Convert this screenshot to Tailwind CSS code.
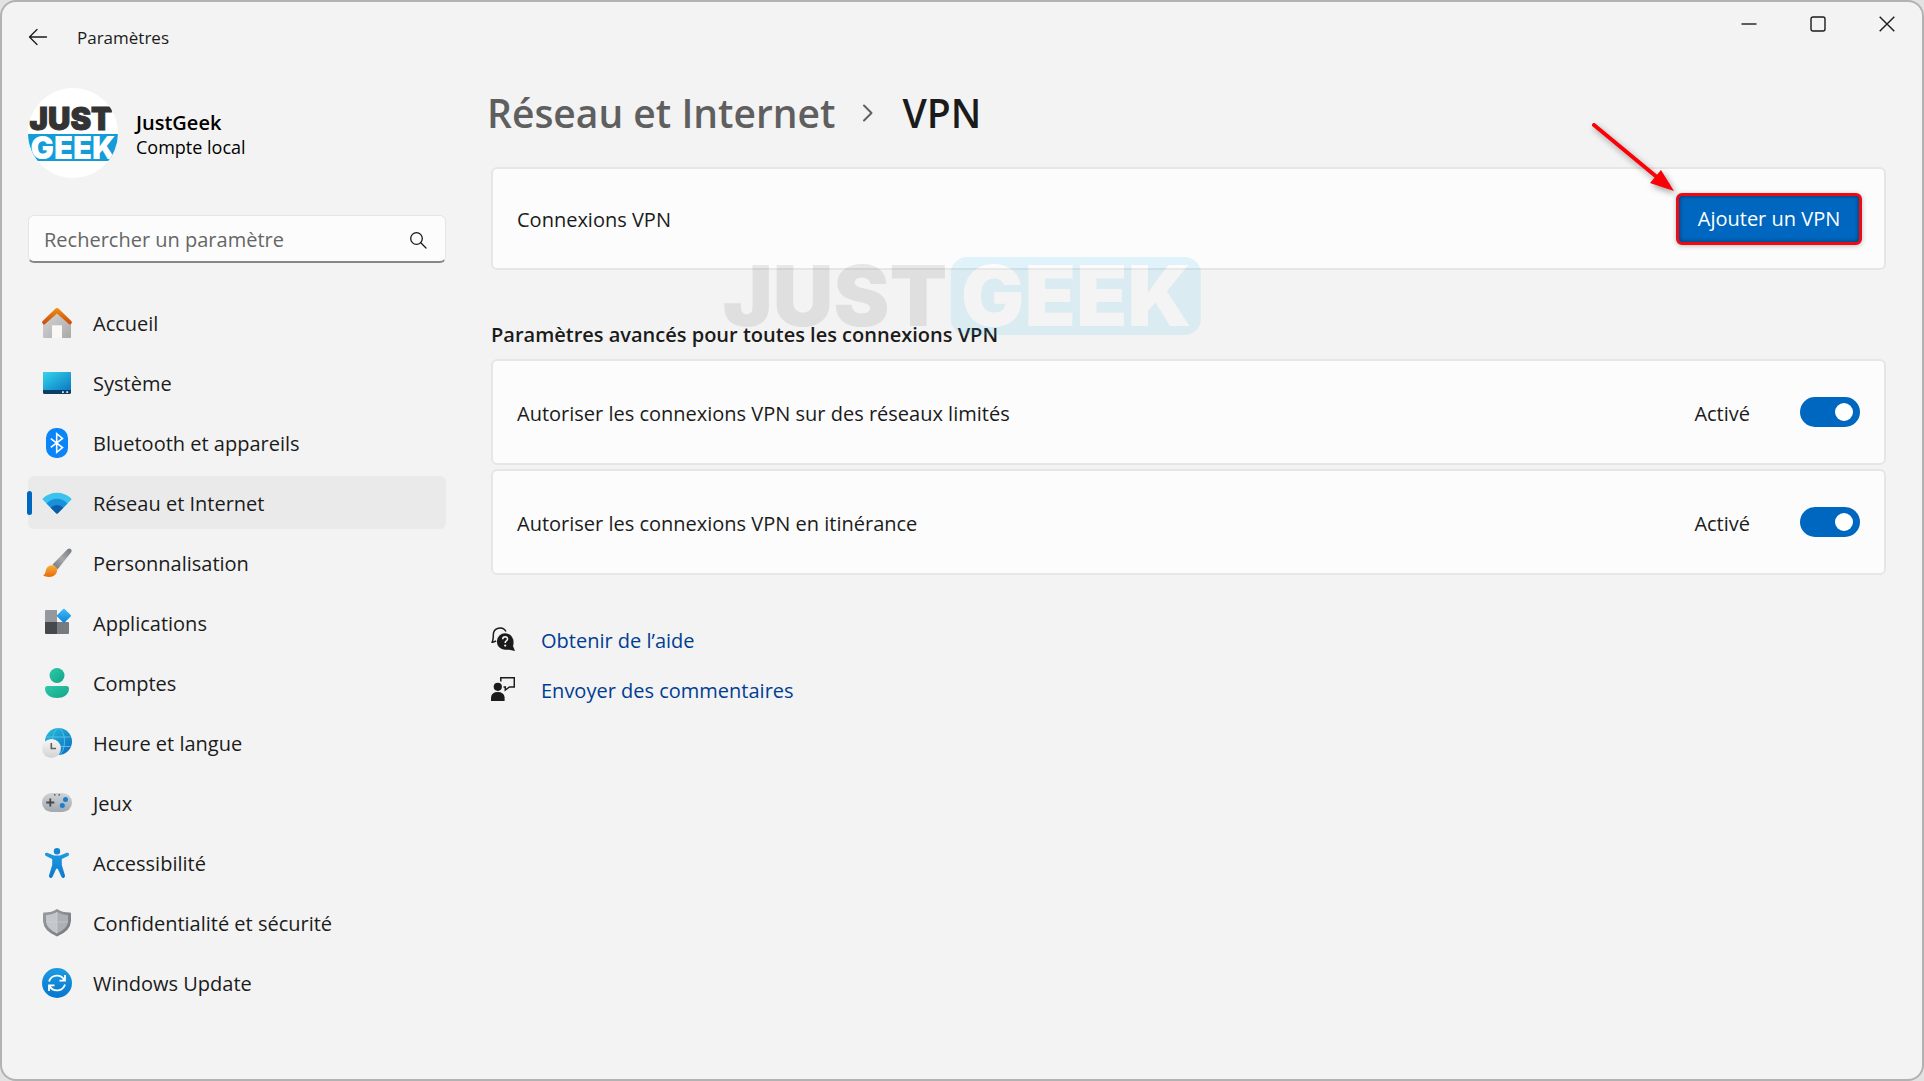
<!DOCTYPE html>
<html lang="fr">
  <head>
    <meta charset="UTF-8" />
    <meta name="viewport" content="width=device-width, initial-scale=1.0" />
    <title>Paramètres</title>
    <script src="https://cdn.jsdelivr.net/npm/@tailwindcss/browser@4"></script>
  </head>
  <body class="bg-[#e2e2e2] font-['Segoe_UI','Open_Sans',sans-serif] text-[#1b1b1b]">
    <div class="relative min-h-screen flex flex-col rounded-2xl border-2 border-[#b2b2b2] bg-[#f3f3f3]">
      <!-- Title bar -->
      <header class="flex h-[70px] items-start justify-between">
        <div class="flex h-full items-center gap-[29px] pl-[26px]">
          <button aria-label="Retour">
            <svg class="h-5 w-5" viewBox="0 0 20 20" fill="none" stroke="#1b1b1b" stroke-width="1.3" stroke-linecap="round" stroke-linejoin="round">
              <path d="M18.500 10H1.500M9 2.500L1.500 10L9 17.500" />
            </svg>
          </button>
          <h1 class="pt-0.5 text-[17px] leading-6">Paramètres</h1>
        </div>
        <div class="flex pr-px">
          <button class="flex h-11 w-[69px] items-center justify-center" aria-label="Réduire">
            <svg class="h-4 w-4" viewBox="0 0 16 16" stroke="#1b1b1b" stroke-width="1.4"><path d="M0.500 8H15.500" /></svg>
          </button>
          <button class="flex h-11 w-[69px] items-center justify-center" aria-label="Agrandir">
            <svg class="h-4 w-4" viewBox="0 0 16 16" fill="none" stroke="#1b1b1b" stroke-width="1.4"><rect x="1" y="1" width="14" height="14" rx="2" /></svg>
          </button>
          <button class="flex h-11 w-[69px] items-center justify-center" aria-label="Fermer">
            <svg class="h-4 w-4" viewBox="0 0 16 16" fill="none" stroke="#1b1b1b" stroke-width="1.4"><path d="M0.700 0.700L15.300 15.300M15.300 0.700L0.700 15.300" /></svg>
          </button>
        </div>
      </header>

      <div class="flex flex-1">
        <!-- Sidebar -->
        <aside class="w-[444px] shrink-0 pl-[26px] pt-4">
          <div class="flex items-center gap-[18px]">
            <svg class="h-[90px] w-[90px]" viewBox="0 0 90 90" role="img" aria-label="JustGeek">
              <clipPath id="avatar"><circle cx="45" cy="45" r="45" /></clipPath>
              <g clip-path="url(#avatar)">
                <rect width="90" height="90" fill="#fff" />
                <rect y="46" width="90" height="27" fill="#149cd8" />
                <g class="font-['Inter'] font-black" font-size="31" text-anchor="middle">
                  <text x="43" y="42" fill="#333" stroke="#333">JUST</text>
                  <text x="45" y="71" fill="#fff">GEEK</text>
                </g>
              </g>
            </svg>
            <div class="pt-1 text-black">
              <p class="text-[20px] font-semibold leading-6">JustGeek</p>
              <p class="text-[18px] leading-6">Compte local</p>
            </div>
          </div>

          <form class="relative mt-[37px]">
            <label for="search" class="sr-only">Rechercher un paramètre</label>
            <input
              type="text"
              id="search"
              placeholder="Rechercher un paramètre"
              class="block h-[48px] w-full rounded-md border border-b-2 border-[#e5e5e5] border-b-[#868686] bg-[#fcfcfc] pl-[15px] pr-12 pt-0.5 text-[20px] placeholder:text-[#666]"
            />
            <svg class="absolute right-[19px] top-4 h-[18px] w-[18px]" viewBox="0 0 18 18" fill="none" stroke="#1b1b1b" stroke-width="1.3" stroke-linecap="round">
              <circle cx="7.500" cy="7.500" r="5.800" /><path d="M11.800 11.800L17 17" />
            </svg>
          </form>

          <nav class="mt-[33px] flex flex-col gap-[7px] text-[20px]">
            <a href="#" class="flex h-[53px] items-center gap-[21px] rounded-md pl-[14px]">
              <svg class="h-[30px] w-[30px]" viewBox="0 0 30 30">
                <defs>
                  <linearGradient id="wall" x1="0" y1="0" x2="1" y2="1"><stop stop-color="#d8d8d8" /><stop offset="1" stop-color="#a9a9a9" /></linearGradient>
                  <linearGradient id="roof" x1="0" y1="0" x2="0" y2="1"><stop stop-color="#f28c12" /><stop offset="1" stop-color="#c8480c" /></linearGradient>
                </defs>
                <path d="M1 14L15 2L29 14V29a1 1 0 0 1-1 1H20V18.500a1 1 0 0 0-1-1H11a1 1 0 0 0-1 1V30H2a1 1 0 0 1-1-1Z" fill="url(#wall)" />
                <path d="M10 17.500h10V30H10z" fill="#faf8f5" />
                <path d="M13.600 0.600Q15-0.500 16.400 0.600L29.300 13Q30.300 14 29.700 15L28.700 16.200Q28 17 27.200 16.200L15 5.500L2.800 16.200Q2 17 1.300 16.200L0.300 15Q-0.300 14 0.700 13Z" fill="url(#roof)" />
              </svg>
              <span class="pt-[3px]">Accueil</span>
            </a>
            <a href="#" class="flex h-[53px] items-center gap-[21px] rounded-md pl-[14px]">
              <svg class="h-[30px] w-[30px]" viewBox="0 0 30 30">
                <defs><linearGradient id="screen" x1="0" y1="0" x2="1" y2="1"><stop stop-color="#35d6ec" /><stop offset="1" stop-color="#0b78c4" /></linearGradient></defs>
                <rect x="1" y="4" width="28" height="22" rx="1.500" fill="#0a3f63" />
                <path d="M1 22V5.500A1.500 1.500 0 0 1 2.500 4h25A1.500 1.500 0 0 1 29 5.500V22Z" fill="url(#screen)" />
                <path d="M20 23.300h1.800v1.600H20zM24.300 23.300h1.800v1.600h-1.800z" fill="#d9eef8" />
              </svg>
              <span class="pt-[3px]">Système</span>
            </a>
            <a href="#" class="flex h-[53px] items-center gap-[21px] rounded-md pl-[14px]">
              <svg class="h-[30px] w-[30px]" viewBox="0 0 30 30">
                <rect x="4" y="0" width="22" height="30" rx="10" fill="#0a84f8" />
                <path d="M8.800 10.600L20.500 19.500L14.700 24.300V5.700L20.500 10.500L8.800 19.400" fill="none" stroke="#fff" stroke-width="1.600" />
              </svg>
              <span class="pt-[3px]">Bluetooth et appareils</span>
            </a>
            <a href="#" class="relative flex h-[53px] items-center gap-[21px] rounded-md bg-[#eaeaea] pl-[14px]" aria-current="page">
              <span class="absolute left-0 h-6 w-[5px] -translate-x-px rounded-full bg-[#0067c0]"></span>
              <svg class="h-[30px] w-[30px]" viewBox="0 0 30 30">
                <path d="M0.800 11.800Q0.200 11 1 10.300Q7 4.800 15 4.800Q23 4.800 29 10.300Q29.800 11 29.200 11.800L15.800 25.200Q15 26 14.200 25.200Z" fill="#3ac3ee" />
                <path d="M4.500 15.500Q9 10.800 15 10.800Q21 10.800 25.500 15.500L15.800 25.200Q15 26 14.200 25.200Z" fill="#1a8fdc" />
                <path d="M8.700 19.700Q11.500 17 15 17Q18.500 17 21.300 19.700L15.800 25.200Q15 26 14.200 25.200Z" fill="#0d5ca8" />
              </svg>
              <span class="pt-[3px]">Réseau et Internet</span>
            </a>
            <a href="#" class="flex h-[53px] items-center gap-[21px] rounded-md pl-[14px]">
              <svg class="h-[30px] w-[30px]" viewBox="0 0 30 30">
                <defs>
                  <linearGradient id="handle" x1="1" y1="0" x2="0" y2="1"><stop stop-color="#75787c" /><stop offset="0.500" stop-color="#a5a8ac" /><stop offset="1" stop-color="#6f7276" /></linearGradient>
                  <linearGradient id="bristle" x1="0" y1="0" x2="0" y2="1"><stop stop-color="#fbab3a" /><stop offset="1" stop-color="#e66a0c" /></linearGradient>
                </defs>
                <path d="M10.500 16.500L25.500 1.200Q27.300-0.300 29 1.200Q30.200 2.700 29 4.600L15.500 21.500Z" fill="url(#handle)" />
                <path d="M10 17.300Q14.500 17.300 15.200 22Q14.800 28.500 7 29Q3 29 1 27.200Q3.500 26.300 3.700 23Q4.800 17.500 10 17.300Z" fill="url(#bristle)" />
              </svg>
              <span class="pt-[3px]">Personnalisation</span>
            </a>
            <a href="#" class="flex h-[53px] items-center gap-[21px] rounded-md pl-[14px]">
              <svg class="h-[30px] w-[30px]" viewBox="0 0 30 30">
                <defs><linearGradient id="tile" x1="0" y1="0" x2="1" y2="1"><stop stop-color="#3fc0f5" /><stop offset="1" stop-color="#0f7fd9" /></linearGradient></defs>
                <path d="M4 2h11v12H3V3a1 1 0 0 1 1-1Z" fill="#95999d" />
                <path d="M3 14h12v12H4a1 1 0 0 1-1-1Z" fill="#45484c" />
                <path d="M15 14h11a1 1 0 0 1 1 1v10a1 1 0 0 1-1 1H15Z" fill="#777b80" />
                <rect x="16.600" y="2.500" width="10.600" height="10.600" rx="1" transform="rotate(45 21.900 7.800)" fill="url(#tile)" />
              </svg>
              <span class="pt-[3px]">Applications</span>
            </a>
            <a href="#" class="flex h-[53px] items-center gap-[21px] rounded-md pl-[14px]">
              <svg class="h-[30px] w-[30px]" viewBox="0 0 30 30">
                <defs><linearGradient id="person" x1="0" y1="0" x2="1" y2="1"><stop stop-color="#2ecaa8" /><stop offset="1" stop-color="#12a488" /></linearGradient></defs>
                <circle cx="15" cy="7.500" r="7.500" fill="url(#person)" />
                <path d="M5.500 18H24.500Q27 18 27 20.500C27 27 21 30 15 30S3 27 3 20.500Q3 18 5.500 18Z" fill="url(#person)" />
              </svg>
              <span class="pt-[3px]">Comptes</span>
            </a>
            <a href="#" class="flex h-[53px] items-center gap-[21px] rounded-md pl-[14px]">
              <svg class="h-[30px] w-[30px]" viewBox="0 0 30 30">
                <defs>
                  <linearGradient id="globe" x1="0" y1="0" x2="1" y2="1"><stop stop-color="#27c2d9" /><stop offset="1" stop-color="#0c66c2" /></linearGradient>
                  <linearGradient id="clock" x1="0" y1="0" x2="0" y2="1"><stop stop-color="#f7f7f7" /><stop offset="1" stop-color="#d2d2d2" /></linearGradient>
                </defs>
                <circle cx="16.500" cy="13.500" r="13.500" fill="url(#globe)" />
                <g fill="none" stroke="#4cc3e6" stroke-width="1">
                  <ellipse cx="16.500" cy="13.500" rx="6" ry="13" />
                  <path d="M4.500 9H28.500M4.500 18.500H28.500" />
                </g>
                <circle cx="9.500" cy="20.500" r="9.500" fill="url(#clock)" />
                <path d="M9.300 15V20.500H14" fill="none" stroke="#5c5f63" stroke-width="1.600" />
              </svg>
              <span class="pt-[3px]">Heure et langue</span>
            </a>
            <a href="#" class="flex h-[53px] items-center gap-[21px] rounded-md pl-[14px]">
              <svg class="h-[30px] w-[30px]" viewBox="0 0 30 30">
                <defs><linearGradient id="pad" x1="0" y1="0" x2="0" y2="1"><stop stop-color="#cfd3d7" /><stop offset="1" stop-color="#a3a8ae" /></linearGradient></defs>
                <rect x="0" y="5" width="30" height="19" rx="9.500" fill="url(#pad)" />
                <path d="M8.300 10.500V18.500M4.300 14.500H12.300" stroke="#44484c" stroke-width="1.800" />
                <circle cx="23.500" cy="11.500" r="2.500" fill="#1580d0" />
                <circle cx="20.300" cy="17.500" r="2.500" fill="#1580d0" />
                <circle cx="12.800" cy="6.800" r="0.900" fill="#5b5f63" />
                <circle cx="17.200" cy="6.800" r="0.900" fill="#5b5f63" />
              </svg>
              <span class="pt-[3px]">Jeux</span>
            </a>
            <a href="#" class="flex h-[53px] items-center gap-[21px] rounded-md pl-[14px]">
              <svg class="h-[30px] w-[30px]" viewBox="0 0 30 30">
                <defs><linearGradient id="body" x1="0" y1="0" x2="0" y2="1"><stop stop-color="#1c9ae2" /><stop offset="1" stop-color="#0f79d0" /></linearGradient></defs>
                <circle cx="15" cy="3.200" r="3.200" fill="#1784d4" />
                <path d="M5.200 4.800L12 7.600H18L24.800 4.800Q26.400 4.400 27 5.800Q27.300 7.300 26 8L19.800 11V17L23 27.500Q23.300 29.300 21.800 29.900Q20.200 30.200 19.400 28.700L15.800 20.800H14.200L10.600 28.700Q9.800 30.200 8.200 29.900Q6.700 29.300 7 27.500L10.200 17V11L4 8Q2.700 7.300 3 5.800Q3.600 4.400 5.200 4.800Z" fill="url(#body)" />
              </svg>
              <span class="pt-[3px]">Accessibilité</span>
            </a>
            <a href="#" class="flex h-[53px] items-center gap-[21px] rounded-md pl-[14px]">
              <svg class="h-[30px] w-[30px]" viewBox="0 0 30 30">
                <defs><linearGradient id="shield" x1="0" y1="0" x2="1" y2="1"><stop stop-color="#9a9da1" /><stop offset="1" stop-color="#73767a" /></linearGradient></defs>
                <path d="M15 1Q20 4.500 28 4.500Q29 4.500 29 5.500V13Q28.500 23 15 28.500Q1.500 23 1 13V5.500Q1 4.500 2 4.500Q10 4.500 15 1Z" fill="url(#shield)" />
                <path d="M15 4V25.500Q4.300 20.500 4 13V7.200Q10 7 15 4Z" fill="#c3c7cb" />
                <path d="M15 4V25.500Q25.700 20.500 26 13V7.200Q20 7 15 4Z" fill="#adb1b5" />
                <path d="M15 4V25.500M4 14H26" stroke="#d0d3d6" stroke-width="0.600" />
              </svg>
              <span class="pt-[3px]">Confidentialité et sécurité</span>
            </a>
            <a href="#" class="flex h-[53px] items-center gap-[21px] rounded-md pl-[14px]">
              <svg class="h-[30px] w-[30px]" viewBox="0 0 30 30">
                <defs><linearGradient id="update" x1="0" y1="0" x2="0" y2="1"><stop stop-color="#1c9be0" /><stop offset="1" stop-color="#0876cf" /></linearGradient></defs>
                <circle cx="15" cy="15" r="15" fill="url(#update)" />
                <path d="M7 13.500A8.300 8.300 0 0 1 22.300 12M17.500 12.600H23V7M23 16.500A8.300 8.300 0 0 1 7.700 18M12.500 17.400H7V23" fill="none" stroke="#fff" stroke-width="1.800" />
              </svg>
              <span class="pt-[3px]">Windows Update</span>
            </a>
          </nav>
        </aside>

        <!-- Content -->
        <main class="flex-1 pl-[45px] pr-9 pt-[14px]">
          <h2 class="-ml-1 flex items-center text-[39px] font-semibold leading-[54px]">
            <a href="#" class="text-[#5f5f5f]">Réseau et Internet</a>
            <svg class="ml-[23px] mr-6 h-5 w-5" viewBox="0 0 20 20" fill="none" stroke="#5f5f5f" stroke-width="2" stroke-linecap="round" stroke-linejoin="round"><path d="M6 2.500L13.500 10L6 17.500" /></svg>
            <span>VPN</span>
          </h2>

          <section class="mt-[27px] flex h-[103px] items-center justify-between rounded-md border-2 border-[#e6e6e6] bg-[#fcfcfc] pl-6 pr-[22px] text-[20px]">
            <span class="pt-[3px]">Connexions VPN</span>
            <div class="relative">
              <button class="h-[52px] w-[186px] rounded-md border-3 border-[#ee0a14] bg-[#0067c0] pt-px text-white shadow-[inset_0_0_5px_#00000080,0_1px_5px_#00000040]">Ajouter un VPN</button>
              <!-- Arrow pointing at the button -->
              <svg class="absolute bottom-full right-full h-[76px] w-[88px] drop-shadow-[2px_3px_3px_#00000060]" viewBox="0 0 88 76">
                <path d="M6 8L70 61" stroke="#fb0007" stroke-width="4" stroke-linecap="round" />
                <path d="M86 74L62 66L73 53Z" fill="#fb0007" />
              </svg>
            </div>
          </section>

          <section class="pt-[51px] text-[20px]">
            <h3 class="font-semibold leading-7">Paramètres avancés pour toutes les connexions VPN</h3>
            <div class="mt-[10px] flex flex-col gap-1">
              <div class="flex h-[106px] items-center rounded-md border-2 border-[#e6e6e6] bg-[#fcfcfc] pl-6 pr-6">
                <label for="metered" class="flex-1 pt-[3px]">Autoriser les connexions VPN sur des réseaux limités</label>
                <span class="mr-[50px] pt-[3px]">Activé</span>
                <input type="checkbox" role="switch" id="metered" checked class="flex h-[30px] w-[60px] appearance-none items-center rounded-full bg-[#a0a0a0] px-[7px] before:h-[18px] before:w-[18px] before:rounded-full before:bg-white checked:justify-end checked:bg-[#0067c0]" />
              </div>
              <div class="flex h-[106px] items-center rounded-md border-2 border-[#e6e6e6] bg-[#fcfcfc] pl-6 pr-6">
                <label for="roaming" class="flex-1 pt-[3px]">Autoriser les connexions VPN en itinérance</label>
                <span class="mr-[50px] pt-[3px]">Activé</span>
                <input type="checkbox" role="switch" id="roaming" checked class="flex h-[30px] w-[60px] appearance-none items-center rounded-full bg-[#a0a0a0] px-[7px] before:h-[18px] before:w-[18px] before:rounded-full before:bg-white checked:justify-end checked:bg-[#0067c0]" />
              </div>
            </div>
          </section>

          <!-- Help links -->
          <div class="mt-[39px] flex flex-col items-start text-[20px] text-[#003e92]">
            <a href="#" class="flex h-[50px] items-center gap-[26px]">
              <svg class="h-6 w-6" viewBox="0 0 24 24">
                <path d="M15 4.500A6.800 6.800 0 0 0 2.300 8Q2.500 12 1.200 15.200Q3.500 15 5 13.800" fill="none" stroke="#1b1b1b" stroke-width="1.500" />
                <path d="M14.300 6.200A8.300 8.300 0 1 1 14 22.800A8.300 8.300 0 0 1 14.300 6.200ZM22.200 12Q23 17 22 19L24 24L16.500 22.500Z" fill="#1b1b1b" />
                <path d="M11.700 12.300Q11.700 9.800 14.200 9.800Q16.700 9.900 16.500 12.200Q16.200 13.600 14.800 14.400Q14.200 14.900 14.200 16" fill="none" stroke="#f3f3f3" stroke-width="1.600" />
                <circle cx="14.200" cy="18.600" r="1.100" fill="#f3f3f3" />
              </svg>
              <span class="pt-[3px]">Obtenir de l’aide</span>
            </a>
            <a href="#" class="flex h-[50px] items-center gap-[26px]">
              <svg class="h-6 w-6" viewBox="0 0 24 24">
                <circle cx="6.800" cy="9.800" r="4.100" fill="#1b1b1b" />
                <path d="M0 24V20.500Q0.500 15 6.800 15Q13.100 15 13.600 20.500V24Z" fill="#1b1b1b" />
                <path d="M9.800 4.500V0.800H23.300V10H18.500L14.300 13V10H12.500" fill="none" stroke="#1b1b1b" stroke-width="1.500" />
              </svg>
              <span class="pt-[3px]">Envoyer des commentaires</span>
            </a>
          </div>
        </main>
      </div>

      <!-- Watermark -->
      <div class="pointer-events-none absolute left-1/2 top-[255px] flex -translate-x-1/2 items-center gap-1 font-['Inter'] text-[84px] font-black leading-[78px] opacity-12" aria-hidden="true">
        <span class="text-[#555]">JUST</span>
        <span class="rounded-2xl bg-[#2bb5ef] px-2.5 text-white">GEEK</span>
      </div>
    </div>
  </body>
</html>
